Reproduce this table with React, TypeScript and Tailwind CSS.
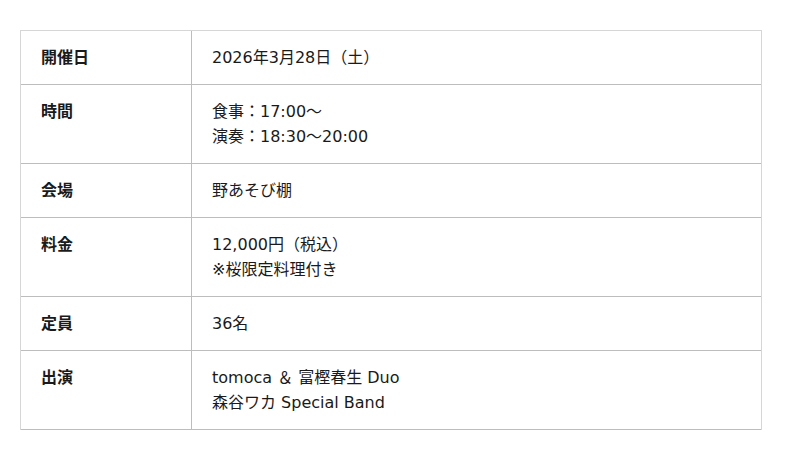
const rows: { label: string; lines: string[] }[] = [
  { label: "開催日", lines: ["2026年3月28日（土）"] },
  { label: "時間", lines: ["食事：17:00〜", "演奏：18:30〜20:00"] },
  { label: "会場", lines: ["野あそび棚"] },
  { label: "料金", lines: ["12,000円（税込）", "※桜限定料理付き"] },
  { label: "定員", lines: ["36名"] },
  { label: "出演", lines: ["tomoca ＆ 富樫春生 Duo", "森谷ワカ Special Band"] },
];

const App = () => {
  return (
    <div
      className="min-h-[460px] bg-white px-5 pt-[30px] text-[#1a1a1a]"
      style={{ fontFamily: '"DejaVu Sans", "Noto Sans CJK JP", sans-serif' }}
    >
      <div className="w-[742px] border border-b-0 border-[#d6d6d6]">
        {rows.map((row) => (
          <div key={row.label} className="grid grid-cols-[171px_1fr] border-b border-[#bdbdbd]">
            <div className="border-r border-[#bdbdbd] px-5 py-[14px] text-[16px] font-bold leading-[25px]">
              {row.label}
            </div>
            <div className="px-5 py-[14px] text-[16px] leading-[25px]">
              {row.lines.map((line) => (
                <div key={line}>{line}</div>
              ))}
            </div>
          </div>
        ))}
      </div>
    </div>
  );
};

export default App;
